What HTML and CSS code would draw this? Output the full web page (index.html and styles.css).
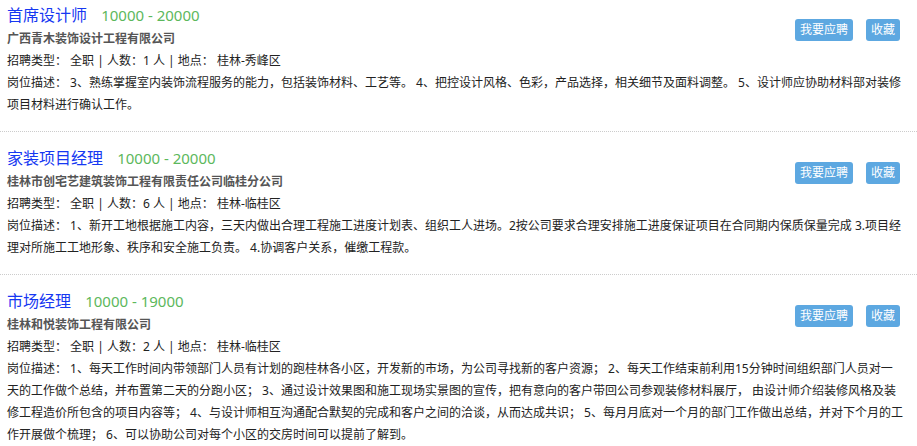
FILE: index.html
```html
<!DOCTYPE html>
<html lang="zh-CN">
<head>
    <meta charset="UTF-8">
    <meta name="viewport" content="width=device-width, initial-scale=1.0">
    <title>招聘信息</title>
    <link rel="stylesheet" href="styles.css">
</head>
<body>
    <div class="job-list">
        <div class="job">
            <div class="job-actions">
                <a class="btn" href="#">我要应聘</a>
                <a class="btn" href="#">收藏</a>
            </div>
            <div class="job-head">
                <a class="job-title" href="#">首席设计师</a>
                <span class="salary">10000 - 20000</span>
            </div>
            <div class="company">广西青木装饰设计工程有限公司</div>
            <div class="meta">招聘类型： 全职 | 人数：1 人 | 地点： 桂林-秀峰区</div>
            <div class="desc">岗位描述： 3、熟练掌握室内装饰流程服务的能力，包括装饰材料、工艺等。 4、把控设计风格、色彩，产品选择，相关细节及面料调整。 5、设计师应协助材料部对装修项目材料进行确认工作。</div>
        </div>
        <div class="job">
            <div class="job-actions">
                <a class="btn" href="#">我要应聘</a>
                <a class="btn" href="#">收藏</a>
            </div>
            <div class="job-head">
                <a class="job-title" href="#">家装项目经理</a>
                <span class="salary">10000 - 20000</span>
            </div>
            <div class="company">桂林市创宅艺建筑装饰工程有限责任公司临桂分公司</div>
            <div class="meta">招聘类型： 全职 | 人数：6 人 | 地点： 桂林-临桂区</div>
            <div class="desc">岗位描述： 1、新开工地根据施工内容，三天内做出合理工程施工进度计划表、组织工人进场。2按公司要求合理安排施工进度保证项目在合同期内保质保量完成 3.项目经理对所施工工地形象、秩序和安全施工负责。 4.协调客户关系，催缴工程款。</div>
        </div>
        <div class="job">
            <div class="job-actions">
                <a class="btn" href="#">我要应聘</a>
                <a class="btn" href="#">收藏</a>
            </div>
            <div class="job-head">
                <a class="job-title" href="#">市场经理</a>
                <span class="salary">10000 - 19000</span>
            </div>
            <div class="company">桂林和悦装饰工程有限公司</div>
            <div class="meta">招聘类型： 全职 | 人数：2 人 | 地点： 桂林-临桂区</div>
            <div class="desc">岗位描述： 1、每天工作时间内带领部门人员有计划的跑桂林各小区，开发新的市场，为公司寻找新的客户资源； 2、每天工作结束前利用15分钟时间组织部门人员对一天的工作做个总结，并布置第二天的分跑小区； 3、通过设计效果图和施工现场实景图的宣传，把有意向的客户带回公司参观装修材料展厅， 由设计师介绍装修风格及装修工程造价所包含的项目内容等； 4、与设计师相互沟通配合默契的完成和客户之间的洽谈，从而达成共识； 5、每月月底对一个月的部门工作做出总结，并对下个月的工作开展做个梳理； 6、可以协助公司对每个小区的交房时间可以提前了解到。</div>
        </div>
    </div>
</body>
</html>
```

FILE: styles.css
```css
body{
    margin: 0;
    font-family: "Noto Sans", "Noto Sans CJK SC", sans-serif;
    font-size: 12px;
    color: #222;
}
a{
    text-decoration: none;
}
.job{
    padding: 15px 13px 15px 7px;
    border-bottom: 1px dotted #ccc;
    line-height: 22px;
}
.job:first-child{
    padding-top: 4px;
}
.job-actions{
    float: right;
    display: flex;
    gap: 13px;
    margin-top: 15px;
    margin-right: 4px;
}
.btn{
    display: block;
    height: 22px;
    line-height: 22px;
    padding: 0px 5px;
    background-color: #5da8e1;
    color: white;
    border-radius: 3px;
    font-size: 12px;
}
.job-title{
    font-size: 16px;
    color: #1638f2;
}
.salary{
    font-size: 15px;
    color: #5cb85c;
    margin-left: 11px;
}
.company{
    font-weight: bold;
    color: #555;
}
.desc{
    color: #222;
}
```
